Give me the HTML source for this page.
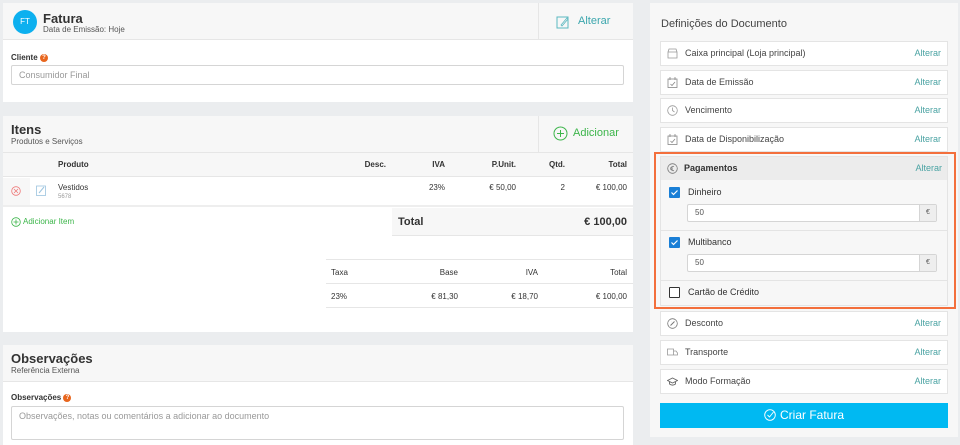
<!DOCTYPE html>
<html><head><meta charset="utf-8"><style>
*{box-sizing:border-box;margin:0;padding:0}
body{width:960px;height:441px;overflow:hidden;background:#ebedef;font-family:"Liberation Sans","DejaVu Sans",sans-serif;color:#333;position:relative;font-size:9px}
.a{position:absolute}
.card{position:absolute;left:3px;width:630px;background:#fff}
.hd{position:absolute;left:0;top:0;width:630px;height:37px;background:#f7f7f7;border-bottom:1px solid #e6e6e6}
.q{display:inline-block;width:8px;height:8px;border-radius:50%;background:#e8661e;color:#fff;font-size:6px;text-align:center;line-height:8px;vertical-align:1px;font-weight:bold}
.inp{position:absolute;border:1px solid #d5d5d5;border-radius:2px;background:#fff;color:#999;font-size:9px;padding-left:7px}
.row{position:absolute;left:660px;width:288px;height:25px;background:#fff;border:1px solid #e4e4e4;font-size:9px;line-height:23px;padding-left:24px;color:#444}
.row .al{position:absolute;right:6px;top:0;color:#4aa3a3}
.row .ic{position:absolute;left:6px;top:6px;width:11px;height:11px}
.cb{position:absolute;width:11px;height:11px;border-radius:1px}
</style></head><body>

<div class="card" style="top:3px;height:99px">
 <div class="hd"></div>
 <div class="a" style="left:10px;top:7px;width:24px;height:24px;border-radius:50%;background:#0db0ef;color:#fff;font-size:8px;line-height:24px;text-align:center">FT</div>
 <div class="a" style="left:40px;top:8px;font-size:13px;font-weight:bold;color:#333">Fatura</div>
 <div class="a" style="left:40px;top:22px;font-size:8px;color:#555">Data de Emissão: Hoje</div>
 <div class="a" style="left:535px;top:0;width:1px;height:37px;background:#e6e6e6"></div>
 <svg class="a" style="left:553px;top:12px" width="14" height="14" viewBox="0 0 14 14"><rect x="1" y="2" width="11" height="11" fill="none" stroke="#5bb8c0" stroke-width="1"/><path d="M5 10 L11 3 L12 4 L6 11Z" fill="none" stroke="#5bb8c0" stroke-width=".8"/></svg>
 <div class="a" style="left:575px;top:12px;font-size:11px;color:#3ba6ad">Alterar</div>
 <div class="a" style="left:8px;top:50px;font-size:8px;font-weight:bold">Cliente <span class="q">?</span></div>
 <div class="inp" style="left:8px;top:62px;width:613px;height:20px;line-height:18px">Consumidor Final</div>
</div>

<div class="card" style="top:116px;height:216px">
 <div class="hd"></div>
 <div class="a" style="left:8px;top:6px;font-size:13px;font-weight:bold">Itens</div>
 <div class="a" style="left:8px;top:21px;font-size:8px;color:#555">Produtos e Serviços</div>
 <div class="a" style="left:535px;top:0;width:1px;height:37px;background:#e6e6e6"></div>
 <svg class="a" style="left:550px;top:10px" width="15" height="15"><circle cx="7.5" cy="7.5" r="6.5" fill="none" stroke="#3cb54a" stroke-width="1"/><path d="M7.5 4v7M4 7.5h7" stroke="#3cb54a"/></svg>
 <div class="a" style="left:570px;top:11px;font-size:11px;color:#3cb54a">Adicionar</div>
 <div class="a" style="left:0;top:37px;width:630px;height:24px;background:#f7f7f7;border-bottom:1px solid #e6e6e6;font-weight:bold;font-size:8px;line-height:23px">
  <span class="a" style="left:55px">Produto</span>
  <span class="a" style="right:247px">Desc.</span>
  <span class="a" style="right:188px">IVA</span>
  <span class="a" style="right:117px">P.Unit.</span>
  <span class="a" style="right:68px">Qtd.</span>
  <span class="a" style="right:6px">Total</span>
 </div>
 <div class="a" style="left:0;top:62px;width:27px;height:27px;background:#f7f7f7"></div>
 <svg class="a" style="left:8px;top:70px" width="10" height="10"><circle cx="5" cy="5" r="4.3" fill="none" stroke="#e77" stroke-width=".8"/><path d="M3 3l4 4M7 3l-4 4" stroke="#e77" stroke-width=".8"/></svg>
 <svg class="a" style="left:33px;top:69px" width="11" height="11"><rect x=".5" y="1" width="9" height="9.5" fill="none" stroke="#9cc4df" stroke-width=".8"/><path d="M3 8l5-6" stroke="#9cc4df"/></svg>
 <div class="a" style="left:55px;top:67px;font-size:8px">Vestidos</div>
 <div class="a" style="left:55px;top:78px;font-size:6px;color:#999">5678</div>
 <div class="a" style="right:188px;top:67px;font-size:8px">23%</div>
 <div class="a" style="right:117px;top:67px;font-size:8px">€ 50,00</div>
 <div class="a" style="right:68px;top:67px;font-size:8px">2</div>
 <div class="a" style="right:6px;top:67px;font-size:8px">€ 100,00</div>
 <div class="a" style="left:0;top:89px;width:630px;height:2px;background:#eee"></div>
 <svg class="a" style="left:8px;top:101px" width="10" height="10"><circle cx="5" cy="5" r="4.3" fill="none" stroke="#3cb54a" stroke-width=".8"/><path d="M5 2.5v5M2.5 5h5" stroke="#3cb54a" stroke-width=".8"/></svg>
 <div class="a" style="left:20px;top:101px;font-size:8px;color:#3cb54a">Adicionar Item</div>
 <div class="a" style="left:389px;top:92px;width:241px;height:28px;background:#f7f7f7;border-bottom:1px solid #e6e6e6;font-size:11px;font-weight:bold;line-height:28px">
  <span class="a" style="left:6px">Total</span><span class="a" style="right:6px">€ 100,00</span></div>
 <div class="a" style="left:323px;top:143px;width:307px;height:50px;border-top:1px solid #e6e6e6;font-size:8px">
  <div class="a" style="left:0;top:0;width:307px;height:24px;border-bottom:1px solid #e6e6e6"></div>
  <div class="a" style="left:0;top:24px;width:307px;height:24px;border-bottom:1px solid #e6e6e6"></div>
  <span class="a" style="left:5px;top:8px">Taxa</span><span class="a" style="right:175px;top:8px">Base</span><span class="a" style="right:95px;top:8px">IVA</span><span class="a" style="right:6px;top:8px">Total</span>
  <span class="a" style="left:5px;top:32px">23%</span><span class="a" style="right:175px;top:32px">€ 81,30</span><span class="a" style="right:95px;top:32px">€ 18,70</span><span class="a" style="right:6px;top:32px">€ 100,00</span>
 </div>
</div>

<div class="card" style="top:345px;height:100px">
 <div class="hd"></div>
 <div class="a" style="left:8px;top:6px;font-size:13px;font-weight:bold">Observações</div>
 <div class="a" style="left:8px;top:21px;font-size:8px;color:#555">Referência Externa</div>
 <div class="a" style="left:8px;top:48px;font-size:8px;font-weight:bold">Observações <span class="q">?</span></div>
 <div class="inp" style="left:8px;top:61px;width:613px;height:34px;line-height:18px">Observações, notas ou comentários a adicionar ao documento</div>
</div>

<div class="a" style="left:650px;top:3px;width:308px;height:434px;background:#f7f7f7"></div>
<div class="a" style="left:661px;top:18px;font-size:11px;color:#444">Definições do Documento</div>

<div class="row" style="top:41px"><svg class="ic" viewBox="0 0 11 11"><path d="M1 4h9v6H1zM1 4l1-3h7l1 3" fill="none" stroke="#999" stroke-width=".8"/></svg>Caixa principal (Loja principal)<span class="al">Alterar</span></div>
<div class="row" style="top:70px"><svg class="ic" viewBox="0 0 11 11"><rect x="1" y="2" width="9" height="8.5" fill="none" stroke="#888" stroke-width=".8"/><path d="M3 0v3M8 0v3M3.5 7l1.5 1.5L8 5" fill="none" stroke="#888" stroke-width=".8"/></svg>Data de Emissão<span class="al">Alterar</span></div>
<div class="row" style="top:98px"><svg class="ic" viewBox="0 0 11 11"><circle cx="5.5" cy="5.5" r="4.8" fill="none" stroke="#999" stroke-width=".8"/><path d="M5.5 2.5v3l2 1.5" fill="none" stroke="#999" stroke-width=".8"/></svg>Vencimento<span class="al">Alterar</span></div>
<div class="row" style="top:127px"><svg class="ic" viewBox="0 0 11 11"><rect x="1" y="2" width="9" height="8.5" fill="none" stroke="#888" stroke-width=".8"/><path d="M3 0v3M8 0v3M3.5 7l1.5 1.5L8 5" fill="none" stroke="#888" stroke-width=".8"/></svg>Data de Disponibilização<span class="al">Alterar</span></div>

<div class="a" style="left:654px;top:152px;width:302px;height:157px;border:2px solid #f36f3c"></div>
<div class="a" style="left:660px;top:156px;width:288px;height:150px;background:#f7f7f7;border:1px solid #e4e4e4"></div>
<div class="a" style="left:661px;top:157px;width:286px;height:23px;background:#ececec;font-size:9px;font-weight:bold;line-height:23px;padding-left:23px;color:#333">Pagamentos<span class="a" style="right:5px;font-weight:normal;color:#4aa3a3">Alterar</span></div>
<svg class="a" style="left:667px;top:163px" width="11" height="11"><circle cx="5.5" cy="5.5" r="4.8" fill="none" stroke="#777" stroke-width=".8"/><path d="M7 3.5a2.2 2.2 0 1 0 0 4M3 5h3M3 6.2h3" fill="none" stroke="#777" stroke-width=".7"/></svg>
<div class="cb" style="left:669px;top:187px;background:#1a7fd6"><svg width="11" height="11"><path d="M2.5 5.5l2 2 4-4" fill="none" stroke="#fff" stroke-width="1.2"/></svg></div>
<div class="a" style="left:688px;top:187px;font-size:9px">Dinheiro</div>
<div class="inp" style="left:687px;top:204px;width:250px;height:18px;line-height:16px;color:#555;font-size:8px">50<span class="a" style="right:0;top:0;width:17px;height:16px;background:#eee;border-left:1px solid #d5d5d5;text-align:center;font-size:7px">€</span></div>
<div class="a" style="left:661px;top:230px;width:286px;height:1px;background:#e4e4e4"></div>
<div class="cb" style="left:669px;top:237px;background:#1a7fd6"><svg width="11" height="11"><path d="M2.5 5.5l2 2 4-4" fill="none" stroke="#fff" stroke-width="1.2"/></svg></div>
<div class="a" style="left:688px;top:237px;font-size:9px">Multibanco</div>
<div class="inp" style="left:687px;top:254px;width:250px;height:18px;line-height:16px;color:#555;font-size:8px">50<span class="a" style="right:0;top:0;width:17px;height:16px;background:#eee;border-left:1px solid #d5d5d5;text-align:center;font-size:7px">€</span></div>
<div class="a" style="left:661px;top:280px;width:286px;height:1px;background:#e4e4e4"></div>
<div class="cb" style="left:669px;top:287px;border:1.5px solid #333;background:#fff"></div>
<div class="a" style="left:688px;top:287px;font-size:9px">Cartão de Crédito</div>

<div class="row" style="top:311px"><svg class="ic" viewBox="0 0 11 11"><circle cx="5.5" cy="5.5" r="4.8" fill="none" stroke="#777" stroke-width=".8"/><path d="M3.5 7.5l4-4M4 3.8h.1M7 7.2h.1" stroke="#777" stroke-width="1"/></svg>Desconto<span class="al">Alterar</span></div>
<div class="row" style="top:340px"><svg class="ic" viewBox="0 0 11 11"><path d="M.5 2h6v6h-6zM6.5 4h2.5l1.5 2v2h-4" fill="none" stroke="#999" stroke-width=".8"/></svg>Transporte<span class="al">Alterar</span></div>
<div class="row" style="top:369px"><svg class="ic" viewBox="0 0 11 11"><path d="M.5 4.5L5.5 2l5 2.5-5 2.5z M2.5 5.5v2.5c2 1.5 4 1.5 6 0V5.5" fill="none" stroke="#666" stroke-width=".9"/></svg>Modo Formação<span class="al">Alterar</span></div>

<div class="a" style="left:660px;top:403px;width:288px;height:25px;background:#00b9f2;color:#fff;font-size:12px;line-height:25px;text-align:center"><svg width="12" height="12" style="vertical-align:-2px;margin-right:4px"><circle cx="6" cy="6" r="5.3" fill="none" stroke="#fff" stroke-width=".9"/><path d="M3.5 6l2 2 4-5" fill="none" stroke="#fff" stroke-width=".9"/></svg>Criar Fatura</div>
</body></html>
